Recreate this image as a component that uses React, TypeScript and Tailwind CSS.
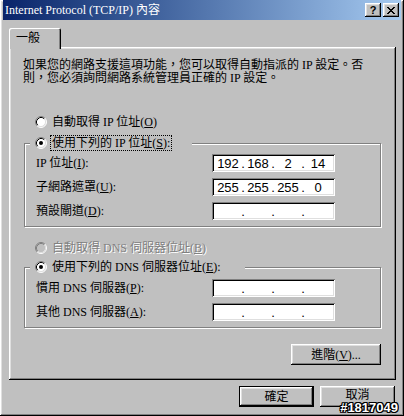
import { Fragment } from "react";

const raised =
  "shadow-[inset_-1px_-1px_#000,inset_1px_1px_#fff,inset_-2px_-2px_#808080,inset_2px_2px_#dfdfdf]";
const sunken =
  "shadow-[inset_1px_1px_#808080,inset_-1px_-1px_#fff,inset_2px_2px_#000,inset_-2px_-2px_#dfdfdf]";
const etched = "border border-[#808080] shadow-[inset_1px_1px_#fff,1px_1px_#fff]";

type RadioProps = { checked?: boolean; disabled?: boolean };

const Radio = ({ checked, disabled }: RadioProps) => (
  <svg width="12" height="12" viewBox="0 0 12 12" className="shrink-0">
    <circle cx="6" cy="6" r="5" fill={disabled ? "#c0c0c0" : "#fff"} />
    <path d="M2.11 9.89 A5.5 5.5 0 0 1 9.89 2.11" stroke="#808080" fill="none" />
    <path d="M9.89 2.11 A5.5 5.5 0 0 1 2.11 9.89" stroke="#fff" fill="none" />
    <path d="M2.82 9.18 A4.5 4.5 0 0 1 9.18 2.82" stroke={disabled ? "#808080" : "#000"} fill="none" />
    <path d="M9.18 2.82 A4.5 4.5 0 0 1 2.82 9.18" stroke="#dfdfdf" fill="none" />
    {checked && <circle cx="6" cy="6" r="2" fill="#000" />}
  </svg>
);

// mnemonic letter, underlined
const M = ({ c }: { c: string }) => <span className="underline underline-offset-1">{c}</span>;

const IpField = ({ parts }: { parts?: string[] }) => {
  const p = parts ?? ["", "", "", ""];
  return (
    <div
      className={`w-[123px] h-[18px] bg-white ${sunken} flex items-center pl-[4px] font-['Liberation_Sans',sans-serif] text-[13px] leading-none text-black`}
    >
      {p.map((v, i) => (
        <Fragment key={i}>
          <span className="w-[24px] text-center">{v}</span>
          {i < 3 && <span className="w-[6px] text-center">.</span>}
        </Fragment>
      ))}
    </div>
  );
};

const FieldRow = ({ label, parts }: { label: React.ReactNode; parts?: string[] }) => (
  <div className="flex items-center h-[18px] pl-[11px]">
    <span className="w-[176px] whitespace-nowrap">{label}</span>
    <IpField parts={parts} />
  </div>
);

const CloseGlyph = () => {
  const rows = ["11000011", "01100110", "00111100", "00011000", "00111100", "01100110", "11000011"];
  return (
    <svg width="8" height="7" viewBox="0 0 8 7" shapeRendering="crispEdges">
      {rows.map((r, y) =>
        r.split("").map((b, x) =>
          b === "1" ? <rect key={`${x}-${y}`} x={x} y={y} width="1" height="1" fill="#000" /> : null
        )
      )}
    </svg>
  );
};

export default function App() {
  return (
    <div
      className={`relative w-[404px] h-[416px] overflow-hidden bg-[#c0c0c0] px-[3px] ${raised} font-['Liberation_Serif','Noto_Sans_CJK_TC',serif] text-[12px] leading-[12px] text-black`}
    >
      {/* Title bar */}
      <div className="h-[20px] flex items-center bg-gradient-to-r from-[#0a246a] to-[#a6caf0] pl-[2px] pr-[2px]">
        <span className="text-white whitespace-nowrap">Internet Protocol (TCP/IP) 內容</span>
        <div className="ml-auto flex gap-[2px]">
          <div className={`w-[16px] h-[14px] bg-[#c0c0c0] ${raised} flex items-center justify-center`}>
            <span className="font-['Liberation_Sans',sans-serif] font-bold text-[11px] leading-none">?</span>
          </div>
          <div className={`w-[16px] h-[14px] bg-[#c0c0c0] ${raised} flex items-center justify-center`}>
            <CloseGlyph />
          </div>
        </div>
      </div>

      {/* Tabs */}
      <div className="mt-[8px] pl-[6px] pr-[5px]">
        <div className="relative z-10 -mb-[2px] w-[52px] h-[21px] bg-[#c0c0c0] rounded-t-[2px] shadow-[inset_1px_1px_#fff,inset_-1px_0_#000,inset_-2px_0_#808080] flex items-start pt-[4px] pl-[7px]">
          <span className="text-[12px]">一般</span>
        </div>

        {/* Tab panel */}
        <div className={`h-[333px] ${raised} flex flex-col px-[15px] pt-[12px]`}>
          <div className="-ml-[1px] whitespace-nowrap leading-[13px]">
            <div>如果您的網路支援這項功能，您可以取得自動指派的 IP 設定。否</div>
            <div>則，您必須詢問網路系統管理員正確的 IP 設定。</div>
          </div>

          <div className="mt-[31px] h-[12px] flex items-center gap-[5px] pl-[11px]">
            <Radio />
            <span className="whitespace-nowrap">
              自動取得 IP 位址(<M c="O" />)
            </span>
          </div>

          {/* Static IP group */}
          <div className={`relative mt-[15px] ${etched} pt-[10px] pb-[6px] flex flex-col gap-[6px]`}>
            <div className="absolute -top-[9px] left-[5px] w-[162px] h-[16px] bg-[#c0c0c0] flex items-center gap-[3px] pl-[5px]">
              <Radio checked />
              <span className="border border-dotted border-black px-[1px] h-[16px] flex items-center whitespace-nowrap">
                使用下列的 IP 位址(<M c="S" />):
              </span>
            </div>
            <FieldRow label={<>IP 位址(<M c="I" />):</>} parts={["192", "168", "2", "14"]} />
            <FieldRow label={<>子網路遮罩(<M c="U" />):</>} parts={["255", "255", "255", "0"]} />
            <FieldRow label={<>預設閘道(<M c="D" />):</>} />
          </div>

          <div className="mt-[15px] h-[12px] flex items-center gap-[5px] pl-[11px]">
            <Radio disabled />
            <span className="whitespace-nowrap text-[#808080] [text-shadow:1px_1px_0_#fff]">
              自動取得 DNS 伺服器位址(<M c="B" />)
            </span>
          </div>

          {/* DNS group */}
          <div className={`relative mt-[13px] ${etched} pt-[11px] pb-[6px] flex flex-col gap-[6px]`}>
            <div className="absolute -top-[9px] left-[5px] w-[215px] h-[16px] bg-[#c0c0c0] flex items-center gap-[5px] pl-[5px]">
              <Radio checked />
              <span className="whitespace-nowrap">
                使用下列的 DNS 伺服器位址(<M c="E" />):
              </span>
            </div>
            <FieldRow label={<>慣用 DNS 伺服器(<M c="P" />):</>} />
            <FieldRow label={<>其他 DNS 伺服器(<M c="A" />):</>} />
          </div>

          <div className="mt-[16px] flex justify-end">
            <button
              type="button"
              className={`w-[90px] h-[21px] bg-[#c0c0c0] ${raised} flex items-center justify-center whitespace-nowrap`}
            >
              進階(<M c="V" />)...
            </button>
          </div>
        </div>
      </div>

      {/* Dialog buttons */}
      <div className="mt-[6px] flex justify-end gap-[6px] pr-[6px]">
        <button
          type="button"
          className={`w-[75px] h-[21px] bg-[#c0c0c0] border border-black ${raised} flex items-center justify-center`}
        >
          確定
        </button>
        <button
          type="button"
          className={`w-[75px] h-[21px] bg-[#c0c0c0] ${raised} flex items-start justify-center pt-[3px]`}
        >
          取消
        </button>
      </div>

      {/* watermark */}
      <span className="absolute right-[6px] bottom-[2px] font-['Liberation_Sans',sans-serif] font-bold text-[13px] leading-none text-white [text-shadow:1px_0_0_#000,-1px_0_0_#000,0_1px_0_#000,0_-1px_0_#000,1px_1px_0_#000,-1px_-1px_0_#000,1px_-1px_0_#000,-1px_1px_0_#000]">
        #1817049
      </span>
    </div>
  );
}
